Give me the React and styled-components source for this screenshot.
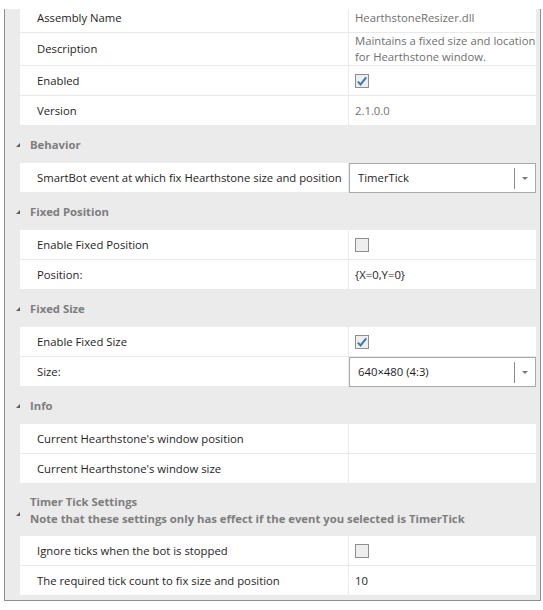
import React from 'react'
import styled, { createGlobalStyle } from 'styled-components'

const GlobalStyle = createGlobalStyle`
  body {
    margin: 0;
    background: #ffffff;
    font-family: "Open Sans", "Noto Sans", sans-serif;
    font-size: 11.3px;
  }
`

const Grid = styled.div`
  box-sizing: border-box;
  margin: 9px 0 0 4px;
  width: 537px;
  height: 592px;
  overflow: hidden;
  background: #ebebeb;
  border: 1px solid #8f8f8f;
  border-top: none;
  padding: 0 4px 5px 15px;
`

const Clip = styled.div`
  margin-top: -6px;
`

const Header = styled.div`
  display: flex;
  align-items: center;
  height: ${p => p.$tall ? 52 : 37}px;
  color: #7d7d7d;
  font-weight: 700;
  font-size: 11.3px;
  line-height: 17px;
  margin-left: -15px;
`

const Arrow = styled.span`
  width: 0;
  height: 0;
  border-bottom: 4px solid #5f5f5f;
  border-left: 4px solid transparent;
  margin: ${p => p.$low ? '8px' : '1px'} 10px 0 11px;
`

const Row = styled.div`
  display: grid;
  grid-template-columns: 328px 187px;
  column-gap: 1px;
  min-height: ${p => p.$h || 29}px;
  border-bottom: 1px solid #e9e9e9;
`

const Cell = styled.div`
  background: #ffffff;
  display: flex;
  align-items: center;
  position: relative;
  padding-left: ${p => p.$value ? 6 : 17}px;
  color: ${p => p.$muted ? '#6f6f6f' : '#1e1e1e'};
  line-height: 16px;
  white-space: nowrap;
`

const Box = styled.span`
  box-sizing: border-box;
  width: 14px;
  height: 14px;
  border: 1px solid #8e8e8e;
  background: #eeeeee;
  display: flex;
  align-items: center;
  justify-content: center;
`

const Combo = styled.div`
  position: absolute;
  left: 0;
  top: 0;
  box-sizing: border-box;
  width: 187px;
  height: 30px;
  border: 1px solid #a9a9a9;
  background: #ffffff;
  display: flex;
  align-items: center;
  padding-left: 8px;
  color: #1e1e1e;
`

const ComboText = styled.span`
  flex: 1;
`

const ComboSep = styled.span`
  width: 1px;
  height: 21px;
  background: #8a8a8a;
`

const ComboArrow = styled.span`
  width: 20px;
  display: flex;
  justify-content: center;
  &::after {
    content: '';
    width: 0;
    height: 0;
    border-left: 3px solid transparent;
    border-right: 3px solid transparent;
    border-top: 3px solid #7a7a7a;
  }
`

function Check({ on }) {
  return (
    <Box>
      {on && (
        <svg width="12" height="12" viewBox="0 0 12 12">
          <path d="M1.8 6.6 L4.6 9.4 L10.2 2.4" fill="none" stroke="#3d7aab" strokeWidth="2" />
        </svg>
      )}
    </Box>
  )
}

function Select({ value }) {
  return (
    <Combo>
      <ComboText>{value}</ComboText>
      <ComboSep />
      <ComboArrow />
    </Combo>
  )
}

function Prop({ label, children, muted, h }) {
  return (
    <Row $h={h}>
      <Cell>{label}</Cell>
      <Cell $value $muted={muted}>{children}</Cell>
    </Row>
  )
}

function Category({ title, children }) {
  return (
    <>
      <Header>
        <Arrow />
        {title}
      </Header>
      {children}
    </>
  )
}

export default function App() {
  return (
    <>
      <GlobalStyle />
      <Grid>
        <Clip>
          <Prop label="Assembly Name" muted>HearthstoneResizer.dll</Prop>
          <Prop label="Description" muted h={31}>
            <span>Maintains a fixed size and location<br />for Hearthstone window.</span>
          </Prop>
          <Prop label="Enabled"><Check on /></Prop>
          <Prop label="Version" muted>2.1.0.0</Prop>
        </Clip>

        <Category title="Behavior">
          <Prop label="SmartBot event at which fix Hearthstone size and position">
            <Select value="TimerTick" />
          </Prop>
        </Category>

        <Category title="Fixed Position">
          <Prop label="Enable Fixed Position"><Check /></Prop>
          <Prop label="Position:">{'{X=0,Y=0}'}</Prop>
        </Category>

        <Category title="Fixed Size">
          <Prop label="Enable Fixed Size"><Check on /></Prop>
          <Prop label="Size:"><Select value="640×480 (4:3)" /></Prop>
        </Category>

        <Category title="Info">
          <Prop label="Current Hearthstone's window position" />
          <Prop label="Current Hearthstone's window size" />
        </Category>

        <Header $tall>
          <Arrow $low />
          <div>
            Timer Tick Settings<br />
            Note that these settings only has effect if the event you selected is TimerTick
          </div>
        </Header>
        <Prop label="Ignore ticks when the bot is stopped"><Check /></Prop>
        <Prop label="The required tick count to fix size and position">10</Prop>
      </Grid>
    </>
  )
}
